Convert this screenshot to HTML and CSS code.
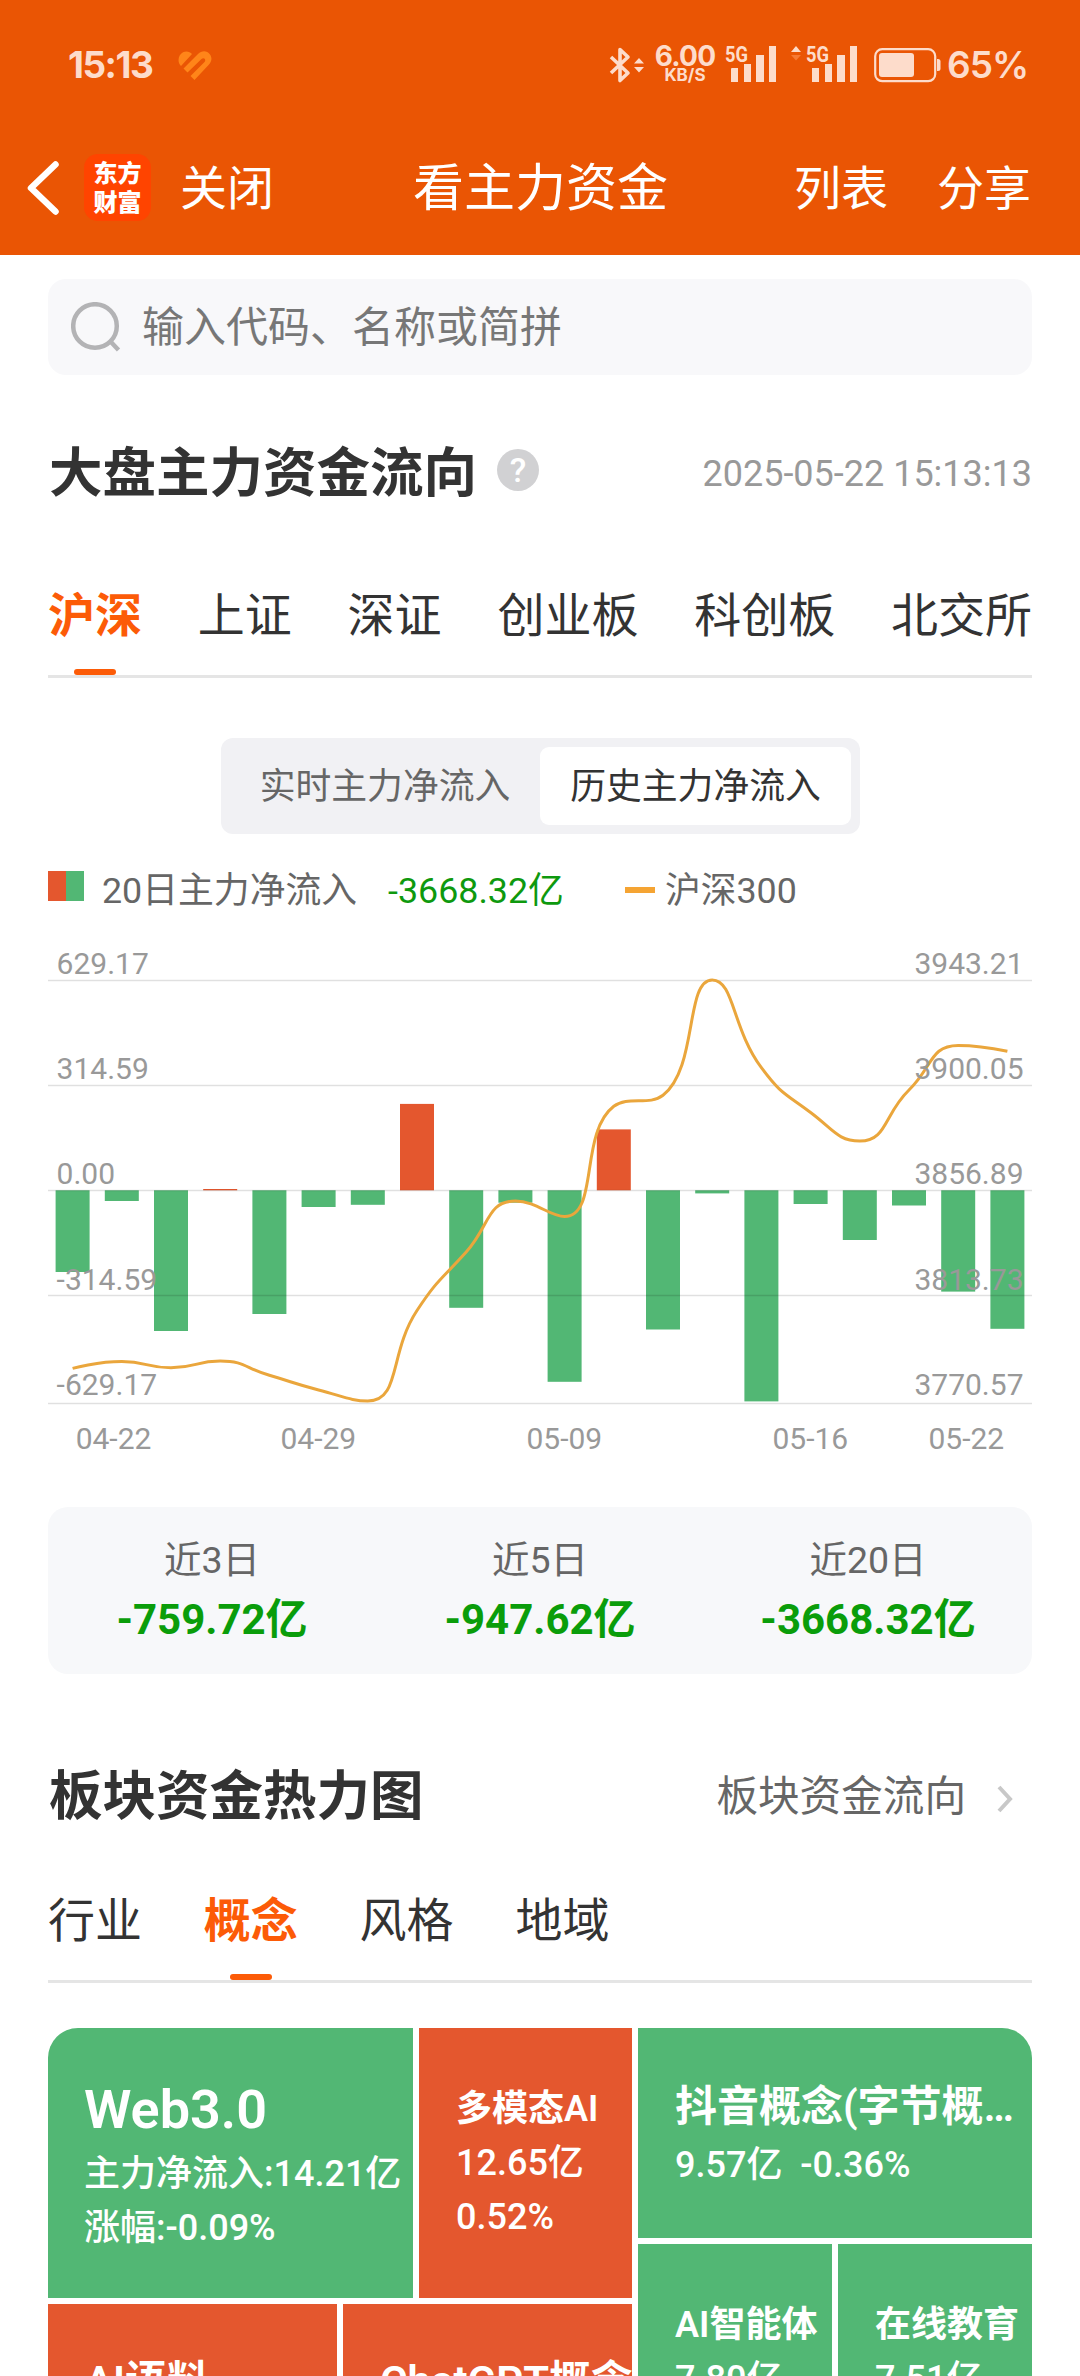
FILE: index.html
```html
<!DOCTYPE html>
<html lang="zh-CN">
<head>
<meta charset="utf-8">
<title>看主力资金</title>
<link rel="stylesheet" href="styles.css">
</head>
<body>
<div class="page">
  <header class="top">
    <div class="status">
      <span class="clock">15:13</span>
      <svg class="heart" width="34" height="30" viewBox="0 0 34 30"><path d="M3 15C-1 11 0 4 5 1.300 8-.4 12 .4 14 3Z"/><path d="M5.500 17.500 20 3C24-.8 29-.4 32 3.500 34.500 7 33.500 11 31 13.500L16.500 29 12.500 25 26.500 11C28.500 8.500 26 6 23.500 8L9.500 21.500Z"/></svg>
      <svg class="bt" width="36" height="38" viewBox="0 0 36 38"><path d="M2 11 19 27 11 34.500V3.500L19 11 2 27" fill="none" stroke="currentColor" stroke-width="3.600" stroke-linejoin="round"/><path d="M25 17.500 30 12 35 17.500ZM25 21 30 26.500 35 21Z" fill="currentColor"/></svg>
      <div class="speed"><b>6.00</b><i>KB/S</i></div>
      <svg class="sig1" width="52" height="40" viewBox="0 0 52 40"><text x="0" y="17.500" textLength="23" lengthAdjust="spacingAndGlyphs">5G</text><path d="M6 25a1 1 0 0 1 1-1h6v14H6ZM19 20h7v18h-7ZM31 11h8v27h-8ZM44 2h7v36h-7Z" fill="currentColor"/></svg>
      <svg class="sig2" width="67" height="40" viewBox="0 0 67 40"><path d="M0 8 5 2 10 8Z" fill="currentColor"/><path d="M0 11 5 16.500 10 11Z" fill="#f67a35"/><text x="15" y="17.500" textLength="23" lengthAdjust="spacingAndGlyphs">5G</text><path d="M21 24h7v14h-7ZM34 20h7v18h-7ZM46 11h8v27h-8ZM59 2h7v36h-7Z" fill="currentColor"/></svg>
      <svg class="batt" width="67" height="36" viewBox="0 0 67 36"><rect x="1.200" y="1.200" width="60" height="32" rx="7" fill="none" stroke="currentColor" stroke-width="2.200"/><rect x="5" y="5" width="35" height="24" rx="3" fill="currentColor"/><path d="M63 11h1q2.500 0 2.500 2.500v7q0 2.500-2.500 2.500h-1Z" fill="currentColor"/></svg>
      <span class="pct">65%</span>
    </div>
    <nav class="nav">
      <svg class="back" width="32" height="54" viewBox="0 0 32 54"><path d="M28.500 3.500 4 27 28.500 50.500" fill="none" stroke="#fff" stroke-width="6.500" stroke-linecap="round" stroke-linejoin="round"/></svg>
      <div class="logo"><span>东方</span><span>财富</span></div>
      <span class="close">关闭</span>
      <h1>看主力资金</h1>
      <span class="list">列表</span>
      <span class="share">分享</span>
    </nav>
  </header>

  <main>
    <div class="search">
      <svg width="50" height="50" viewBox="0 0 50 50" fill="none" stroke="#b3b3b5"><circle cx="24" cy="24" r="21.800" stroke-width="4.500"/><path d="M39 39 47.500 48" stroke-width="4.500"/></svg>
      <span>输入代码、名称或简拼</span>
    </div>

    <div class="head head-market">
      <h2>大盘主力资金流向</h2>
      <span class="help">?</span>
      <time>2025-05-22 15:13:13</time>
    </div>

    <div class="tabs tabs-market">
      <span class="tab active">沪深</span><span class="tab">上证</span><span class="tab">深证</span><span class="tab">创业板</span><span class="tab">科创板</span><span class="tab">北交所</span>
    </div>

    <div class="segment"><span>实时主力净流入</span><span class="on">历史主力净流入</span></div>

    <div class="legend">
      <i class="swatch"></i><span>20日主力净流入</span><span class="total">-3668.32亿</span><i class="dash"></i><span>沪深300</span>
    </div>

    <svg class="chart" id="chart" width="984" height="540" viewBox="0 0 984 540"></svg>

    <div class="summary">
      <div><span>近3日</span><b>-759.72亿</b></div>
      <div><span>近5日</span><b>-947.62亿</b></div>
      <div><span>近20日</span><b>-3668.32亿</b></div>
    </div>

    <div class="head head-heat">
      <h2>板块资金热力图</h2>
      <a class="more"><span>板块资金流向</span><svg width="16" height="28" viewBox="0 0 16 28"><path d="M2 2 13 14 2 26" fill="none" stroke="#c8c8c8" stroke-width="4"/></svg></a>
    </div>

    <div class="tabs tabs-heat">
      <span class="tab">行业</span><span class="tab active">概念</span><span class="tab">风格</span><span class="tab">地域</span>
    </div>

    <div class="heat">
      <div class="left">
        <div class="row first">
          <div class="cell down web"><h3 class="xl">Web3.0</h3><p>主力净流入:14.21亿</p><p>涨幅:-0.09%</p></div>
          <div class="cell up"><h3>多模态AI</h3><p>12.65亿</p><p>0.52%</p></div>
        </div>
        <div class="row rest">
          <div class="cell up"><h3 class="lg">AI语料</h3></div>
          <div class="cell up"><h3 class="lg">ChatGPT概念</h3></div>
        </div>
      </div>
      <div class="right">
        <div class="cell down wide"><h3 class="lg">抖音概念(字节概…</h3><p>9.57亿&nbsp; -0.36%</p></div>
        <div class="row pair">
          <div class="cell down"><h3>AI智能体</h3><p>7.80亿</p></div>
          <div class="cell down"><h3>在线教育</h3><p>7.51亿</p></div>
        </div>
      </div>
    </div>
  </main>
</div>
<script src="chart.js"></script>
</body>
</html>
```

FILE: styles.css
```css
* { box-sizing: border-box; margin: 0; padding: 0; }
html, body { height: 2376px; overflow: hidden; }
body { font-family: Roboto, "Noto Sans CJK SC", sans-serif; background: #fff; color: #333; }
.page { width: 1080px; height: 2376px; overflow: hidden; }
i { font-style: normal; }
svg { display: block; flex: none; }
span, h1, h2, h3, p, b, time, a { white-space: nowrap; }

.top { height: 255px; background: #ea5504; color: #fff; }
.status { display: flex; align-items: center; height: 128px; padding-left: 68px; color: #fddccb; }
.clock { width: 84px; font: 700 37px/1 Inter, sans-serif; letter-spacing: -1.500px; }
.heart { margin-left: 26px; margin-top: 4px; fill: #ff8519; }
.bt { margin-left: 397px; margin-top: 2px; }
.speed { display: flex; flex-direction: column; align-items: center; width: 60px; margin: 1px 0 0 10px; }
.speed b { font: 700 28px/22px Inter, sans-serif; letter-spacing: -.8px; }
.speed i { font: 700 17px/17px Inter, sans-serif; }
.sig1, .sig2 { margin-top: 0; font: 700 22px Roboto, sans-serif; fill: currentColor; }
.sig1 { margin-left: 10px; }
.sig2 { margin-left: 14px; }
.batt { margin-left: 16px; margin-top: 3px; }
.pct { margin-left: 6px; font: 600 37px/1 Inter, sans-serif; letter-spacing: -1px; }

.nav { display: flex; align-items: center; height: 119px; padding: 0 49px 0 27px; }
.nav > span, .nav h1 { line-height: 70px; padding-top: 3px; }
.logo { display: flex; flex-direction: column; align-items: center; justify-content: center; width: 67px; height: 67px; margin-left: 25px; padding-bottom: 4px; border-radius: 14px; background: #ff4400; }
.logo span { font: 900 24px/29px "Noto Sans CJK SC", sans-serif; }
.close { margin-left: 29px; font-size: 47px; }
.nav h1 { margin-left: 139px; font-size: 51px; font-weight: 400; }
.list { margin-left: auto; font-size: 47px; }
.share { margin-left: 49px; font-size: 47px; }

main { padding: 24px 48px 0; }
.search { display: flex; align-items: center; height: 96px; padding-left: 23px; gap: 21px; border-radius: 18px; background: #f8f8fa; font-size: 42px; color: #777; }
.search span { padding-bottom: 7px; }

.head { display: flex; align-items: center; height: 80px; }
.head h2 { padding: 4px 0 0 1px; font-size: 53.500px; font-weight: 700; line-height: 80px; }
.head-market { margin-top: 57px; }
.help { width: 42px; height: 42px; margin: -4px 0 0 20px; border-radius: 50%; background: #d1d1d3; color: #fff; font: 500 34px/43px Roboto, sans-serif; text-align: center; }
.head time { margin-left: auto; padding-top: 3px; font-size: 36px; color: #999; }

.tabs { display: flex; border-bottom: 3px solid #e5e5e5; font-size: 47px; }
.tab { position: relative; }
.tab.active { font-weight: 700; color: #fc5b07; }
.tab.active::after { content: ""; position: absolute; left: 50%; bottom: 0; width: 42px; height: 6px; margin-left: -21px; border-radius: 3px; background: #fc5b07; }
.tabs-market { justify-content: space-between; height: 126px; margin-top: 40px; line-height: 127px; }
.tabs-heat { gap: 61.800px; height: 126px; margin-top: 22px; line-height: 127px; }

.segment { display: flex; width: 639px; height: 96px; margin: 60px 0 0 173px; padding: 9px; border-radius: 12px; background: #f1f1f4; font-size: 35.800px; line-height: 80px; color: #666; }
.segment span { width: 310px; text-align: center; }
.segment .on { width: 311px; border-radius: 9px; background: #fff; color: #333; }

.legend { display: flex; align-items: center; height: 56px; margin-top: 25px; font-size: 35.800px; color: #666; }
.swatch { width: 36px; height: 30px; margin: -3px 18px 0 0; background: linear-gradient(90deg, #e4572e 50%, #52b774 50%); }
.total { margin-left: 31px; color: #0e990e; }
.dash { width: 30px; height: 6px; margin: 6px 10px 0 61px; background: #f5a433; }

.chart { margin-top: 15px; font-size: 30px; fill: #999; }

.summary { display: grid; grid-template-columns: repeat(3, 1fr); height: 167px; margin-top: 37px; padding-top: 24px; border-radius: 20px; background: #f7f8fa; text-align: center; }
.summary span { display: block; font-size: 37.500px; line-height: 58px; color: #666; }
.summary b { display: block; font-size: 42px; line-height: 61px; color: #0a9d0a; }

.head-heat { margin-top: 81px; }
.more { display: flex; align-items: center; margin-left: auto; padding-right: 19px; gap: 31px; font-size: 41.600px; color: #666; }
.more span { padding-bottom: 4px; }
.more svg { margin-top: 7px; }

.heat { display: flex; gap: 6px; height: 510px; margin-top: 45px; color: #fff; }
.left { display: flex; flex-direction: column; gap: 6px; width: 584px; }
.right { display: flex; flex-direction: column; gap: 6px; flex: 1; }
.row { display: flex; gap: 6px; }
.row .cell { flex: 1; min-width: 0; }
.first { height: 270px; }
.first .web { flex: none; width: 365px; padding-left: 36px; border-top-left-radius: 30px; }
.rest { height: 234px; }
.wide { height: 210px; border-top-right-radius: 30px; }
.pair { height: 268px; }
.cell { display: flex; flex-direction: column; justify-content: center; padding-left: 37px; overflow: hidden; }
.up { background: #e4572e; }
.down { background: #52b774; }
.cell h3 { font-size: 36px; font-weight: 600; line-height: 54px; }
.cell p { font-size: 36px; font-weight: 500; line-height: 54px; }
.cell h3.xl { font-size: 54px; line-height: 75px; }
.cell h3.lg { font-size: 42px; line-height: 63px; }
.rest .cell { justify-content: flex-start; padding-top: 46px; }
.pair .cell { justify-content: flex-start; padding-top: 54px; }
```

FILE: chart.js
```js
// Daily net inflow bars with the CSI 300 line over them.
const svg = document.getElementById('chart');
const NS = 'http://www.w3.org/2000/svg';
const TOP = 930, LEFT = 48, STEP = 49.2, ZERO = 1190.3;
const bars = [1272, 1201, 1331, 1189, 1314, 1207, 1204.8, 1103.9, 1307.8, 1202.7,
  1381.8, 1129.4, 1329.5, 1193.4, 1401.4, 1204, 1240, 1205.5, 1291.6, 1328.8];
const line = [1368.4, 1361.5, 1367.7, 1361, 1375.3, 1390, 1401, 1310.5, 1252, 1201,
  1216.5, 1106.3, 1095.3, 980, 1067.7, 1112.5, 1141, 1090, 1045.4, 1051.2];

function add(name, attrs, text) {
  const el = document.createElementNS(NS, name);
  for (const k in attrs) el.setAttribute(k, attrs[k]);
  if (text) el.textContent = text;
  svg.appendChild(el);
}

bars.forEach((y, i) => {
  const a = Math.min(y, ZERO) - TOP, b = Math.max(y, ZERO) - TOP;
  add('rect', { x: i * STEP + 7.6, y: a, width: 34, height: b - a, fill: y < ZERO ? '#e4572e' : '#52b774' });
});

[980.5, 1085.5, 1190.5, 1295.5, 1403.5].forEach(y =>
  add('path', { d: `M0 ${y - TOP}H984`, stroke: 'rgba(0,0,0,.12)', 'stroke-width': 1.3 }));

const clamp = (v, a, b) => Math.min(Math.max(v, Math.min(a, b)), Math.max(a, b));
const pts = line.map((y, i) => [i * STEP + 24.6, y - TOP]);
let d = `M${pts[0]}`, out = pts[0];
for (let i = 1; i < pts.length; i++) {
  const p = pts[i], prev = pts[i - 1], next = pts[i + 1];
  let inn = p, nextOut = p;
  if (next) {
    const l0 = Math.hypot(p[0] - prev[0], p[1] - prev[1]);
    const l1 = Math.hypot(next[0] - p[0], next[1] - p[1]);
    const r = l1 / (l0 + l1);
    const n = [0, 1].map(k => clamp(p[k] + (next[k] - prev[k]) * 0.5 * r, next[k], p[k]));
    inn = [0, 1].map(k => clamp(p[k] - (n[k] - p[k]) * l0 / l1, prev[k], p[k]));
    nextOut = [0, 1].map(k => p[k] + (p[k] - inn[k]) * l1 / l0);
  }
  d += `C${out} ${inn} ${p}`;
  out = nextOut;
}
add('path', { d, fill: 'none', stroke: '#eaa63c', 'stroke-width': 3 });

['629.17', '314.59', '0.00', '-314.59', '-629.17'].forEach((t, i) =>
  add('text', { x: 8.6, y: 44 + i * 105.2 }, t));
['3943.21', '3900.05', '3856.89', '3813.73', '3770.57'].forEach((t, i) =>
  add('text', { x: 975.5, y: 44 + i * 105.2, 'text-anchor': 'end' }, t));
[['04-22', 113.5], ['04-29', 318.3], ['05-09', 564.3], ['05-16', 810.3], ['05-22', 966.3]].forEach(([t, x]) =>
  add('text', { x: x - LEFT, y: 518.8, 'text-anchor': 'middle' }, t));
```
